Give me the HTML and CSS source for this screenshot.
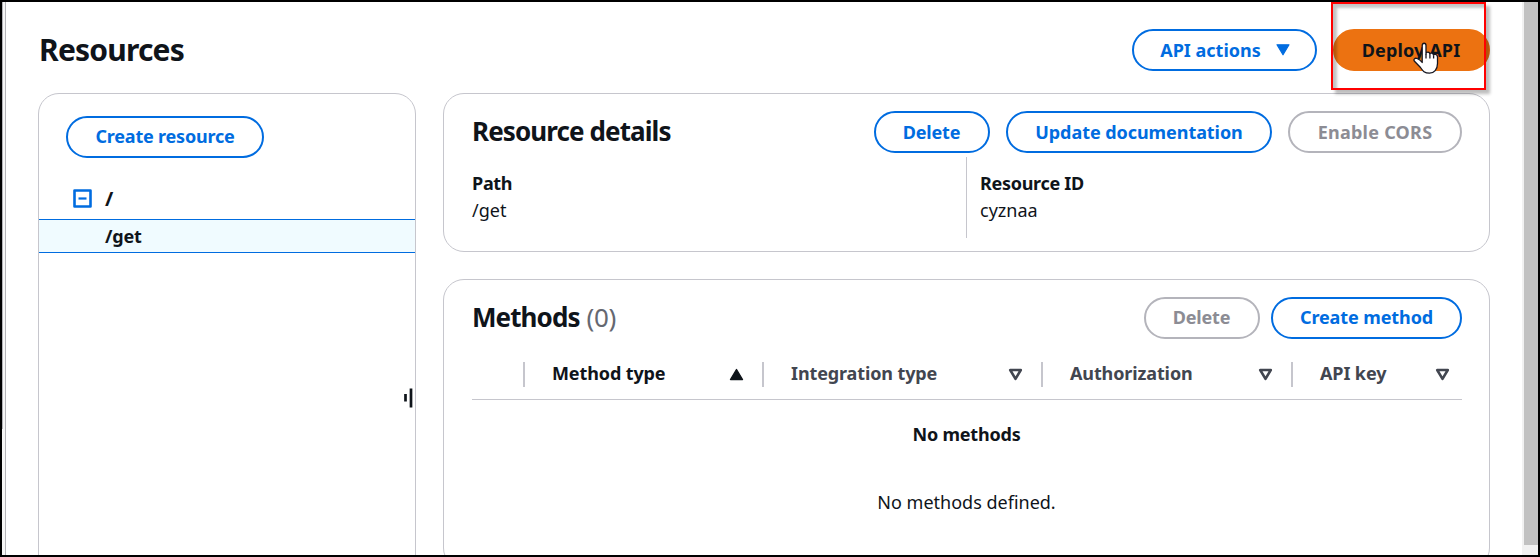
FILE: index.html
```html
<!DOCTYPE html>
<html lang="en">
<head>
<meta charset="utf-8">
<title>Resources</title>
<link rel="stylesheet" href="styles.css">
</head>
<body>
<div class="window">
  <div class="rail"><div class="rail-thumb"></div></div>
  <main class="page">
    <header class="page-header">
      <h1 class="page-title">Resources</h1>
      <div class="page-actions">
        <button class="btn api-actions"><span>API actions</span>
          <svg class="caret" width="14" height="12" viewBox="0 0 14 12"><path d="M1 .8h12L7 10.800z" fill="#006ce0" stroke="#006ce0" stroke-width="1.200" stroke-linejoin="round"/></svg>
        </button>
        <div class="deploy">
          <button class="btn primary">Deploy API</button>
          <div class="highlight"></div>
          <svg class="pointer" width="26" height="33" viewBox="0 0 26 33"><path d="M9.2 18V3.5C9.2 .5 13 .5 13 3.5V12C13 9.5 16.900 9.600 16.900 12.300C17 10.500 20.300 10.600 20.500 13.200C21 11.500 24.500 12 24.500 15V21.500C24.500 27.500 21 31.200 16.500 31.200C11.500 31.200 9.800 29 7.500 25.500L1.500 19.300C0 17.300 2 15.700 4 16.500C6 17.200 7.800 18.500 9.200 20.500Z" fill="#fff" stroke="#15151f" stroke-width="1.300" stroke-linejoin="round"/><path d="M13 12v4.500M16.900 12.500v4M20.600 13.500v3" fill="none" stroke="#15151f" stroke-width="1.300"/></svg>
        </div>
      </div>
    </header>
    <div class="columns">
      <aside class="card tree">
        <button class="btn create raised">Create resource</button>
        <div class="tree-row">
          <svg class="toggle" width="19" height="19" viewBox="0 0 19 19"><path d="M1.500 1.500h16v16h-16z" fill="none" stroke="#006ce0" stroke-width="2.600" stroke-linejoin="round"/><path d="M5.500 9.500h8" stroke="#006ce0" stroke-width="2.200"/></svg>
          <span class="root">/</span>
        </div>
        <div class="tree-row selected"><span>/get</span></div>
        <svg class="resize" width="10" height="20" viewBox="0 0 10 20"><path d="M1.500 6v7.500M7 .5v19" stroke="#0f141a" stroke-width="2.700"/></svg>
      </aside>
      <div class="details">
        <section class="card resource">
          <div class="card-header">
            <h2>Resource details</h2>
            <div class="group">
              <button class="btn b-del">Delete</button>
              <button class="btn b-upd">Update documentation</button>
              <button class="btn disabled b-cors">Enable CORS</button>
            </div>
          </div>
          <dl class="pairs">
            <div><dt>Path</dt><dd>/get</dd></div>
            <div class="second"><dt>Resource ID</dt><dd>cyznaa</dd></div>
          </dl>
        </section>
        <section class="card methods">
          <div class="card-header">
            <h2>Methods <span class="count">(0)</span></h2>
            <div class="group tight">
              <button class="btn disabled b-del raised">Delete</button>
              <button class="btn b-cm raised">Create method</button>
            </div>
          </div>
          <div class="thead">
            <div class="th"></div>
            <div class="th sorted"><span>Method type</span><svg width="15" height="13" viewBox="0 0 15 13"><path d="M1.500 11.500h12L7.500 1.500z" fill="#0f141a" stroke="#0f141a" stroke-width="1.400" stroke-linejoin="round"/></svg></div>
            <div class="th"><span>Integration type</span><svg width="15" height="13" viewBox="0 0 15 13"><path d="M2.200 2h10.600L7.500 10.800z" fill="none" stroke="#424650" stroke-width="2.600" stroke-linejoin="round"/></svg></div>
            <div class="th"><span>Authorization</span><svg width="15" height="13" viewBox="0 0 15 13"><path d="M2.200 2h10.600L7.500 10.800z" fill="none" stroke="#424650" stroke-width="2.600" stroke-linejoin="round"/></svg></div>
            <div class="th"><span>API key</span><svg width="15" height="13" viewBox="0 0 15 13"><path d="M2.200 2h10.600L7.500 10.800z" fill="none" stroke="#424650" stroke-width="2.600" stroke-linejoin="round"/></svg></div>
          </div>
          <div class="empty">
            <strong>No methods</strong>
            <p>No methods defined.</p>
          </div>
        </section>
      </div>
    </div>
  </main>
  <div class="scrollbar"><div class="scroll-thumb"></div></div>
</div>
</body>
</html>
```
FILE: styles.css
```css
* { box-sizing: border-box; }
body { margin: 0; background: #fff; color: #0f141a; font: 18px/26px "Noto Sans", "Open Sans", sans-serif; overflow: hidden; }
h1, h2, p, dl, dt, dd { margin: 0; }
.window { display: flex; width: 1540px; height: 557px; border: 2px solid #000; overflow: hidden; }
.rail { flex: none; width: 4px; border-right: 1px solid #b4b4b8; background: #f6f6f6; }
.rail-thumb { width: 1px; height: 427px; background: #b4b4b8; }
.page { flex: 1; padding: 27px 32px 0; height: 553px; overflow: hidden; }
.page-header { display: flex; justify-content: space-between; align-items: center; height: 42px; margin-bottom: 22px; }
.page-title { padding-left: 1px; font-size: 30px; line-height: 42px; font-weight: 700; letter-spacing: -0.8px; }
.page-actions { display: flex; gap: 16px; }
.btn { display: flex; align-items: center; justify-content: center; height: 42px; padding: 0; border: 2px solid #006ce0; border-radius: 21px; background: #fff; color: #006ce0; font: 700 18px/26px "Noto Sans", "Open Sans", sans-serif; letter-spacing: -0.2px; white-space: nowrap; }
.raised { padding-bottom: 2px; }
.disabled { border-color: #b4b4bb; color: #8c8c94; }
.api-actions { width: 185px; padding-left: 1px; gap: 15px; letter-spacing: 0; }
.deploy { position: relative; }
.primary { width: 157px; padding-right: 1px; background: #ec7211; border-color: #ec7211; color: #0f141a; letter-spacing: 0.15px; }
.highlight { position: absolute; left: -2px; top: -27px; width: 155px; height: 88px; border: 2px solid #f00; box-shadow: 4px 4px 3px rgba(0,0,0,.26), inset 4px 4px 3px rgba(0,0,0,.24); }
.pointer { position: absolute; left: 80px; top: 13px; }
.columns { display: flex; gap: 27px; }
.card { border: 1px solid #c6c6cd; border-radius: 21px; background: #fff; }
.tree { position: relative; flex: none; width: 378px; height: 520px; padding-top: 22px; }
.create { width: 198px; margin-left: 27px; margin-bottom: 22px; }
.tree-row { display: flex; align-items: center; gap: 13px; height: 38px; padding-left: 34px; font-weight: 700; letter-spacing: -0.2px; }
.toggle { margin-bottom: 2px; }
.root { font-size: 20px; }
.selected { height: 34px; margin-top: 1px; padding-left: 66px; border: solid #006ce0; border-width: 1px 0; background: #f0fbff; }
.resize { position: absolute; right: 1px; top: 294px; }
.details { flex: 1; display: flex; flex-direction: column; gap: 27px; }
.card-header { display: flex; justify-content: space-between; align-items: center; height: 42px; }
h2 { padding-bottom: 2px; font-size: 26px; line-height: 36px; font-weight: 700; letter-spacing: -0.9px; }
.count { margin-left: 1px; font-weight: 400; letter-spacing: -0.4px; color: #656871; }
.group { display: flex; gap: 16px; }
.tight { gap: 11px; }
.resource { height: 159px; padding: 17px 27px 0 28px; }
.methods { height: 290px; padding: 17px 27px 0 28px; }
.b-del { width: 116px; padding-right: 1px; }
.b-upd { width: 266px; letter-spacing: -0.06px; }
.b-cors { width: 174px; letter-spacing: 0.25px; }
.b-cm { width: 191px; letter-spacing: -0.1px; }
.pairs { display: flex; margin-top: 4px; height: 81px; line-height: 27px; }
.pairs > div { width: 494px; padding-top: 13px; }
.pairs .second { padding-left: 13px; border-left: 1px solid #c6c6cd; }
dt { font-weight: 700; letter-spacing: -0.3px; }
.thead { display: grid; grid-template-columns: 53px 239px 279px 250px 1fr; align-items: center; height: 61px; padding-top: 10px; border-bottom: 1px solid #c6c6cd; color: #424650; font-weight: 700; letter-spacing: -0.12px; }
.th { display: flex; justify-content: space-between; align-items: center; height: 25px; padding: 0 18px 0 27px; border-right: 2px solid #c6c6cd; }
.th span { padding-bottom: 2px; }
.th:last-child { border: 0; padding-right: 12px; }
.sorted { color: #0f141a; }
.empty { display: flex; flex-direction: column; align-items: center; gap: 42px; padding: 21px 1px 0 0; }
.empty strong { font-weight: 700; letter-spacing: -0.2px; }
.scrollbar { flex: none; width: 16px; padding-left: 2px; background: #f1f1f1; }
.scroll-thumb { height: 543px; background: #c1c1c1; }
```
